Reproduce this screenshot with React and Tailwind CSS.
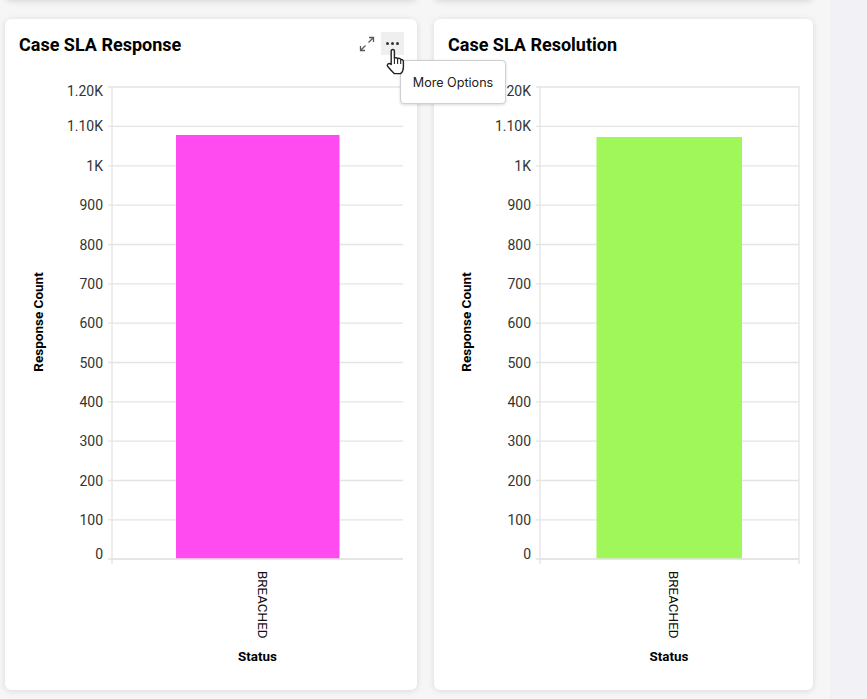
const FONT = "Roboto, 'Liberation Sans', sans-serif";
const LABELS = ["1.20K","1.10K","1K","900","800","700","600","500","400","300","200","100","0"];
const GRID_Y = [87,126.4,165.8,205.2,244.5,283.8,323.2,362.5,401.8,441.2,480.5,519.8,559];

function Chart({ x, w, h, left, right, barX, barW, barY, color, labelX, statusX, axisX, catX, rightLine }) {
  return (
    <svg className="block" width={w} height={h} viewBox={`${x} 77 ${w} ${h}`} style={{ fontFamily: FONT }}>
      {GRID_Y.map((y, i) => (
        <line key={i} x1={left - 4} x2={right} y1={y} y2={y} stroke="#e4e4e4" strokeWidth="1.3" />
      ))}
      <line x1={left} x2={left} y1={86} y2={564} stroke="#e4e4e4" strokeWidth="1.3" />
      {rightLine && <line x1={right} x2={right} y1={86} y2={564} stroke="#e4e4e4" strokeWidth="1.3" />}
      <rect x={barX} y={barY} width={barW} height={559 - barY} fill={color} />
      <line x1={left} x2={right} y1={559} y2={559} stroke="#e3e3e3" strokeWidth="1.6" />
      {LABELS.map((t, i) => (
        <text key={t} x={labelX} y={GRID_Y[i] + 5 + (i === 0 ? 4 : 0) + (i === 12 ? -5 : 0)} textAnchor="end" fontSize="14" fill="#333">{t}</text>
      ))}
      <text transform={`translate(${axisX} 322) rotate(-90)`} textAnchor="middle" fontSize="13.5" fontWeight="700" fill="#000">Response Count</text>
      <text transform={`translate(${catX} 571) rotate(90)`} fontSize="13.4" fill="#111">BREACHED</text>
      <text x={statusX} y={661} textAnchor="middle" fontSize="13.4" fontWeight="700" fill="#000">Status</text>
    </svg>
  );
}

function Hand() {
  return (
    <svg className="absolute left-[386px] top-[48px]" width="20" height="27" viewBox="0 0 20 27">
      <path d="M5.2 3 C5.2 1 8.4 1 8.4 3 L8.4 10.2 C9.6 9.4 11 9.6 11.6 10.6 C12.8 10 14.2 10.4 14.7 11.6 C16 11.2 17.4 12 17.4 13.6 L17.4 19 C17.4 22 16 24.6 14.6 25.6 L8.2 25.6 C6.2 23.6 4.6 21.8 1.6 18.2 C0.4 16.4 3 14.2 5.2 16.4 Z" fill="#fff" stroke="#222" strokeWidth="1.4" strokeLinejoin="round" />
      <path d="M8.4 10.2 L8.4 16 M11.6 10.6 L11.6 16 M14.7 11.6 L14.7 16" stroke="#222" strokeWidth="1.1" fill="none" />
    </svg>
  );
}

export default function App() {
  return (
    <div className="relative flex h-[699px] w-[867px] overflow-hidden bg-[#f1f1f6]" style={{ fontFamily: FONT }}>
      <div className="h-full w-[830px] bg-[#f6f6f7] pl-[5px]">
        <div className="-mt-[20px] flex gap-[17px]">
          <div className="h-[20px] w-[412px] rounded-b-md bg-white shadow-[0_1px_7px_rgba(0,0,0,0.14)]" />
          <div className="h-[20px] w-[379px] rounded-b-md bg-white shadow-[0_1px_7px_rgba(0,0,0,0.14)]" />
        </div>
        <div className="mt-[19px] flex gap-[17px]">
          <section className="h-[671px] w-[412px] rounded-md bg-white shadow-[0_1px_6px_rgba(0,0,0,0.12)]">
            <header className="flex h-[58px] items-start justify-between pl-[14px] pr-[13px] pt-[13px]">
              <h2 className="text-[18px] font-bold leading-[26px] text-black">Case SLA Response</h2>
              <div className="flex items-center gap-[6px]">
                <svg width="16" height="16" viewBox="0 0 16 16" fill="none" strokeWidth="1.3">
                  <path d="M9.5 6.5 L14.5 1.5 M10 1.5 H14.5 V6" stroke="#5a5a5a" />
                  <path d="M6.5 9.5 L1.5 14.5 M1.5 10 V14.5 H6" stroke="#5a5a5a" />
                </svg>
                <button className="flex h-[23px] w-[23px] items-center justify-center gap-[2.5px] bg-[#efefef]">
                  <span className="h-[2.5px] w-[2.5px] rounded-full bg-[#333]" />
                  <span className="h-[2.5px] w-[2.5px] rounded-full bg-[#333]" />
                  <span className="h-[2.5px] w-[2.5px] rounded-full bg-[#333]" />
                </button>
              </div>
            </header>
            <Chart x={5} w={412} h={613} left={112} right={403} barX={176} barW={163.5} barY={135} color="#ff4bf0" labelX={103} statusX={257.5} axisX={43} catX={258} />
          </section>
          <section className="h-[671px] w-[379px] rounded-md bg-white shadow-[0_1px_6px_rgba(0,0,0,0.12)]">
            <header className="h-[58px] pl-[14px] pt-[13px]">
              <h2 className="text-[18px] font-bold leading-[26px] text-black">Case SLA Resolution</h2>
            </header>
            <Chart x={434} w={379} h={613} left={540} right={799} barX={596.5} barW={145.5} barY={137} color="#a0f75a" labelX={531} statusX={669} axisX={471} catX={669} rightLine />
          </section>
        </div>
      </div>
      <div className="absolute left-[400px] top-[60px] flex h-[44px] w-[106px] items-center justify-center rounded-[4px] border border-[#cfcfcf] bg-white pt-[3px] text-[12.6px] text-[#222] shadow-[0_1px_3px_rgba(0,0,0,0.15)]" style={{ fontFamily: "Inter, sans-serif" }}>
        More Options
      </div>
      <Hand />
    </div>
  );
}
